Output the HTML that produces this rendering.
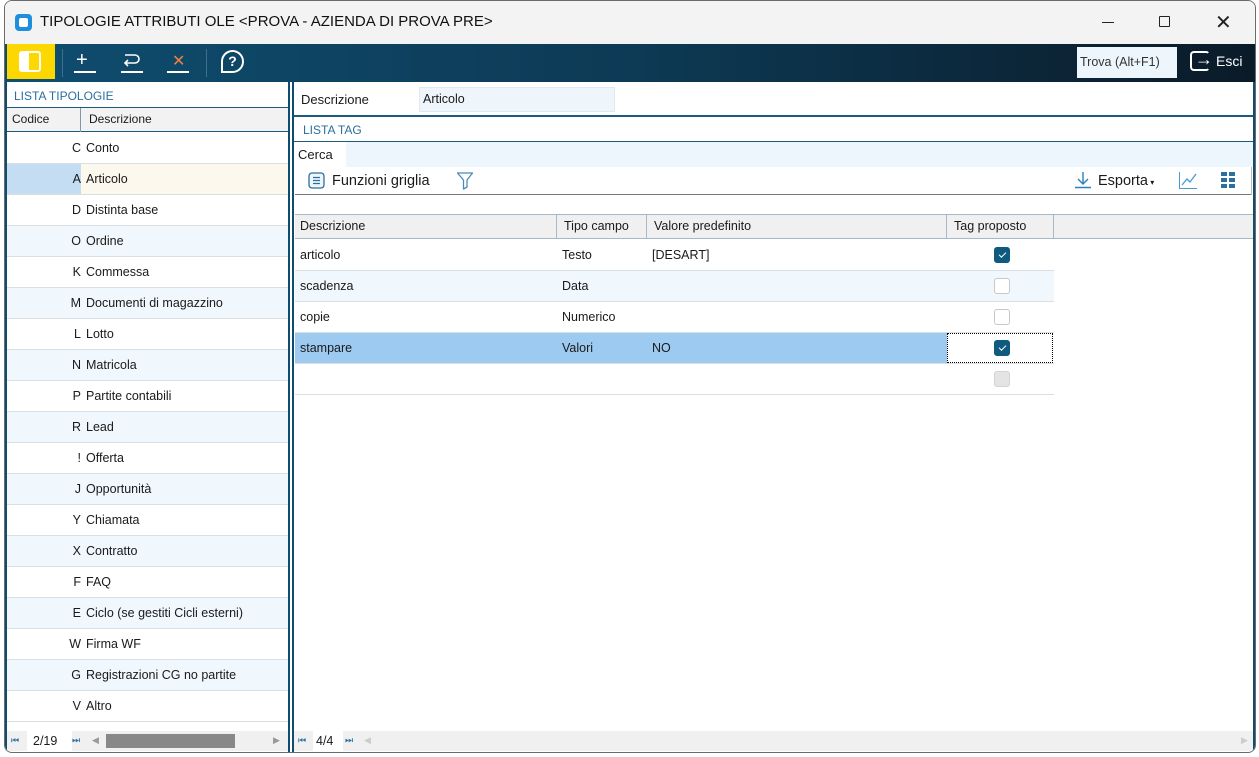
<!DOCTYPE html><html><head><meta charset="utf-8"><style>
*{box-sizing:border-box;margin:0;padding:0}
body{width:1259px;height:757px;background:#fff;font-family:"Liberation Sans",sans-serif;font-size:13px;color:#1a1a1a;position:relative;overflow:hidden}
.a{position:absolute}
.win{left:4px;top:0;width:1252px;height:753px;border:1px solid #6b6b6b;border-radius:8px;overflow:hidden;background:#fff}
.row{position:absolute;height:31px;border-bottom:1px solid #dadfe4;font-size:12.5px;line-height:30px}
.alt{background:#f0f7fd}
.ck{position:absolute;width:16px;height:16px;border-radius:3px;border:1px solid #c8c8c8;background:#fff}
.ck.on{background:#0f5a7e;border-color:#0f5a7e}
.ck.on:after{content:"";position:absolute;left:4px;width:6px;height:3px;border-left:1.5px solid #fff;border-bottom:1.5px solid #fff;transform:rotate(-45deg);top:4px}
</style></head><body>
<div class="a win">
<div class="a" style="left:0;top:0;width:1252px;height:43px;background:#f3f3f3"></div>
<div class="a" style="left:10px;top:13px;width:17px;height:17px;border-radius:4px;background:#1d8fdc"><div class="a" style="left:4px;top:4px;width:9px;height:9px;border-radius:2px;background:#fff"></div></div>
<div class="a" style="left:35px;top:12px;font-size:15px;color:#111">TIPOLOGIE ATTRIBUTI OLE &lt;PROVA - AZIENDA DI PROVA PRE&gt;</div>
<div class="a" style="left:1097px;top:21px;width:12px;height:1px;background:#222"></div>
<div class="a" style="left:1154px;top:15px;width:11px;height:11px;border:1px solid #222;border-radius:1px"></div>
<div class="a" style="left:1210px;top:9px;font-size:20px;color:#222;font-weight:300">✕</div>
<div class="a" style="left:0;top:43px;width:1252px;height:38px;background:linear-gradient(90deg,#0f4d70,#0d3a55 50%,#0b1a28)"></div>
<div class="a" style="left:2px;top:43px;width:48px;height:35px;background:#fdd700"></div>
<div class="a" style="left:14px;top:50px;width:22px;height:21px;border:2px solid #fff;border-radius:3px;background:linear-gradient(90deg,#fff 45%,transparent 45%)"></div>
<div class="a" style="left:57px;top:48px;width:1px;height:28px;background:#3f6f8a"></div>
<div class="a" style="left:201px;top:48px;width:1px;height:28px;background:#3f6f8a"></div>
<div class="a" style="left:71px;top:50px;color:#fff;font-size:20px;line-height:18px">+</div><div class="a" style="left:69px;top:70px;width:22px;height:2px;background:#fff"></div>
<svg class="a" style="left:117px;top:51px" width="20" height="16"><path d="M3 3 H13 A4 4 0 0 1 13 11 H3 M6 8 L3 11 L6 14" stroke="#fff" fill="none" stroke-width="1.6"/></svg>
<div class="a" style="left:116px;top:70px;width:22px;height:2px;background:#fff"></div>
<div class="a" style="left:167px;top:50px;color:#f08040;font-size:16px">✕</div><div class="a" style="left:162px;top:70px;width:22px;height:2px;background:#fff"></div>
<div class="a" style="left:216px;top:49px;width:23px;height:23px;border:2px solid #fff;border-radius:50% 50% 50% 0;color:#fff;font-size:14px;font-weight:bold;text-align:center;line-height:19px">?</div>
<div class="a" style="left:1072px;top:46px;width:100px;height:31px;background:#eef6fd;font-size:12.5px;line-height:31px;padding-left:3px;color:#333">Trova (Alt+F1)</div>
<div class="a" style="left:1185px;top:50px;width:20px;height:20px;border:2px solid #fff;border-radius:4px;border-right-color:transparent"></div>
<div class="a" style="left:1190px;top:48px;color:#fff;font-size:18px">→</div>
<div class="a" style="left:1211px;top:52px;color:#fff;font-size:14px">Esci</div>
<div class="a" style="left:283px;top:81px;width:6px;height:672px;background:#fff;border-left:2px solid #0f4d70;border-right:2px solid #0f4d70"></div>
<div class="a" style="left:9px;top:88px;color:#2a6f9e;font-size:12px">LISTA TIPOLOGIE</div>
<div class="a" style="left:1px;top:106px;width:282px;height:1px;background:#1c5a80"></div>
<div class="a" style="left:1px;top:107px;width:282px;height:24px;background:#f2f2f2;border-bottom:1px solid #1c5a80"></div>
<div class="a" style="left:75px;top:107px;width:1px;height:24px;background:#7f98ae"></div>
<div class="a" style="left:7px;top:111px;font-size:12px">Codice</div>
<div class="a" style="left:84px;top:111px;font-size:12px">Descrizione</div>
<div id="L"></div>
<div class="a" style="left:1px;top:730px;width:282px;height:20px;background:#f0f0f0"></div>
<div class="a" style="left:6px;top:734px;font-size:9px;color:#2a6f9e">⏮</div>
<div class="a" style="left:22px;top:730px;width:45px;height:20px;background:#fff;font-size:12.5px;line-height:20px;padding-left:6px">2/19</div>
<div class="a" style="left:67px;top:734px;font-size:9px;color:#2a6f9e">⏭</div>
<div class="a" style="left:87px;top:734px;font-size:9px;color:#999">◀</div>
<div class="a" style="left:101px;top:733px;width:129px;height:14px;background:#888"></div>
<div class="a" style="left:268px;top:734px;font-size:9px;color:#999">▶</div>
<div class="a" style="left:296px;top:91px;font-size:13px">Descrizione</div>
<div class="a" style="left:414px;top:86px;width:196px;height:25px;background:#eef5fb;border:1px solid #e1e8ef;font-size:12.5px;line-height:23px;padding-left:3px">Articolo</div>
<div class="a" style="left:289px;top:114px;width:960px;height:2px;background:#1c5a80"></div>
<div class="a" style="left:298px;top:122px;color:#2a6f9e;font-size:12px">LISTA TAG</div>
<div class="a" style="left:289px;top:140px;width:960px;height:1px;background:#1c5a80"></div>
<div class="a" style="left:341px;top:141px;width:908px;height:25px;background:#eef6fd"></div>
<div class="a" style="left:293px;top:146px;font-size:13px">Cerca</div>
<div class="a" style="left:290px;top:193px;width:956px;height:1px;background:#777"></div>
<div class="a" style="left:1246px;top:166px;width:1px;height:28px;background:#bbb"></div>
<svg class="a" style="left:303px;top:171px" width="18" height="18"><rect x="1" y="1" width="15" height="15" rx="3" fill="#eef5fb" stroke="#2a6f9e" stroke-width="1.3"/><path d="M5 5.5H12M5 8.5H12M5 11.5H12" stroke="#2a6f9e" stroke-width="1.2"/></svg>
<div class="a" style="left:327px;top:172px;font-size:14.5px">Funzioni griglia</div>
<svg class="a" style="left:451px;top:170px" width="18" height="20"><path d="M1.5 2 H16.5 L11 9 V16 L7.5 18 V9 Z" stroke="#4a8ab8" fill="none" stroke-width="1.3" stroke-linejoin="round"/></svg>
<svg class="a" style="left:1069px;top:170px" width="18" height="18"><path d="M9 1 V13 M4 8 L9 13 L14 8 M1 16.5 H17" stroke="#2a80c0" fill="none" stroke-width="1.4"/></svg>
<div class="a" style="left:1093px;top:172px;font-size:14.5px">Esporta<span style="font-size:8px"> ▾</span></div>
<div class="a" style="left:1174px;top:171px;width:18px;height:17px;border-left:1.5px solid #4a9ad0;border-bottom:1.5px solid #4a9ad0"></div>
<svg class="a" style="left:1176px;top:172px" width="18" height="14"><path d="M1 12 L6 6 L9 9 L15 1" stroke="#4a9ad0" fill="none" stroke-width="1.3"/></svg>
<svg class="a" style="left:1216px;top:171px" width="16" height="16"><g fill="#2a6f9e"><rect x="0" y="0" width="6" height="4"/><rect x="8" y="0" width="6" height="4"/><rect x="0" y="6" width="6" height="4"/><rect x="8" y="6" width="6" height="4"/><rect x="0" y="12" width="6" height="4"/><rect x="8" y="12" width="6" height="4"/></g></svg>
<div class="a" style="left:290px;top:213px;width:958px;height:25px;background:#f0f0f0;border-top:1px solid #a7b8c8;border-bottom:1px solid #a7b8c8"></div>
<div class="a" style="left:551px;top:214px;width:1px;height:23px;background:#a7b8c8"></div>
<div class="a" style="left:641px;top:214px;width:1px;height:23px;background:#a7b8c8"></div>
<div class="a" style="left:941px;top:214px;width:1px;height:23px;background:#a7b8c8"></div>
<div class="a" style="left:1048px;top:214px;width:1px;height:23px;background:#a7b8c8"></div>
<div class="a" style="left:295px;top:218px;font-size:12.5px">Descrizione</div>
<div class="a" style="left:559px;top:218px;font-size:12.5px">Tipo campo</div>
<div class="a" style="left:649px;top:218px;font-size:12.5px">Valore predefinito</div>
<div class="a" style="left:949px;top:218px;font-size:12.5px">Tag proposto</div>
<div id="R"></div>
<div class="a" style="left:289px;top:730px;width:960px;height:20px;background:#f0f0f0"></div>
<div class="a" style="left:293px;top:734px;font-size:9px;color:#2a6f9e">⏮</div>
<div class="a" style="left:308px;top:730px;width:30px;height:20px;background:#fff;font-size:12.5px;line-height:20px;padding-left:3px">4/4</div>
<div class="a" style="left:340px;top:734px;font-size:9px;color:#2a6f9e">⏭</div>
<div class="a" style="left:359px;top:734px;font-size:9px;color:#ccc">◀</div>
<div class="a" style="left:1236px;top:734px;font-size:9px;color:#ccc">▶</div>
<div class="a" style="left:1248px;top:81px;width:4px;height:672px;background:#0f4d70"></div>
<div class="a" style="left:0;top:81px;width:2px;height:672px;background:#0f4d70"></div>
</div>
<script>
var L=[["C","Conto"],["A","Articolo"],["D","Distinta base"],["O","Ordine"],["K","Commessa"],["M","Documenti di magazzino"],["L","Lotto"],["N","Matricola"],["P","Partite contabili"],["R","Lead"],["!","Offerta"],["J","Opportunità"],["Y","Chiamata"],["X","Contratto"],["F","FAQ"],["E","Ciclo (se gestiti Cicli esterni)"],["W","Firma WF"],["G","Registrazioni CG no partite"],["V","Altro"]],h="";
L.forEach(function(r,i){var t=132+i*31,s=i==1;h+='<div class="row '+(i%2?'alt':'')+'" style="left:2px;top:'+t+'px;width:281px">'+(s?'<div class="a" style="left:0;top:0;width:74px;height:30px;background:#c5ddf3"></div><div class="a" style="left:74px;top:0;width:207px;height:30px;background:#fdf8ee"></div>':'')+'<span class="a" style="right:207px">'+r[0]+'</span><span class="a" style="left:79px">'+r[1]+'</span></div>';});
document.getElementById("L").outerHTML=h;
var R=[["articolo","Testo","[DESART]",1],["scadenza","Data","",0],["copie","Numerico","",0],["stampare","Valori","NO",1],["","","",2]];h="";
R.forEach(function(r,i){var t=239+i*31,s=i==3;h+='<div class="row '+(i==1?'alt':'')+'" style="left:290px;top:'+t+'px;width:759px">'+(s?'<div class="a" style="left:0;top:0;width:652px;height:30px;background:#9ccaf0"></div><div class="a" style="left:652px;top:0;width:106px;height:30px;border:1px dotted #000"></div>':'')+'<span class="a" style="left:5px">'+r[0]+'</span><span class="a" style="left:267px">'+r[1]+'</span><span class="a" style="left:357px">'+r[2]+'</span><div class="ck '+(r[3]==1?'on':'')+'" style="left:699px;top:7px;'+(r[3]==2?'background:#e4e4e4;border-color:#d4d4d4':'')+'"></div></div>';});
document.getElementById("R").outerHTML=h;
</script>
</body></html>
